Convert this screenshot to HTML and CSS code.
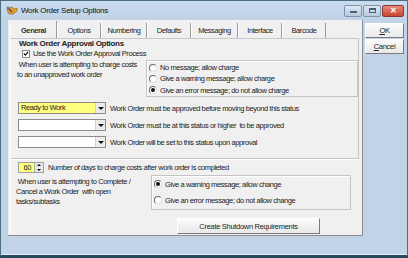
FILE: index.html
```html
<!DOCTYPE html>
<html lang="en">
<head>
    <meta charset="UTF-8">
    <title>Work Order Setup Options</title>
    <link rel="stylesheet" href="styles.css">
</head>
<body>
<div class="window">
    <div class="titlebar">
        <svg class="app-icon" width="12" height="11" viewBox="0 0 12 11">
            <path d="M1 5 L5 2 L9 4 L11 3 L11 6 L7 9 L3 9 Z" fill="#e0a030" stroke="#8a5a10" stroke-width="0.6"/>
            <path d="M2 3 L6 7" stroke="#555" stroke-width="1.6"/>
            <circle cx="2" cy="3" r="1.4" fill="#777"/>
        </svg>
        <span class="title">Work Order Setup Options</span>
        <div class="controls">
            <span class="ctl"><i class="min"></i></span>
            <span class="ctl"><i class="max"></i></span>
            <span class="ctl close">&#x2715;</span>
        </div>
    </div>

    <div class="client">
        <div class="sheet">
            <div class="tabs">
                <span class="tab active">General</span>
                <span class="tab">Options</span>
                <span class="tab">Numbering</span>
                <span class="tab">Defaults</span>
                <span class="tab">Messaging</span>
                <span class="tab">Interface</span>
                <span class="tab">Barcode</span>
            </div>
            <div class="page">
                <div class="group">
                    <div class="group-title">Work Order Approval Options</div>
                    <label class="check-row">
                        <span class="checkbox">
                            <svg width="7" height="7" viewBox="0 0 7 7"><path d="M1 3.5 L2.8 5.3 L6 1.5" fill="none" stroke="#111" stroke-width="1.4"/></svg>
                        </span>
                        Use the Work Order Approval Process
                    </label>
                    <div class="approval-row">
                        <div class="hint">&nbsp;When user is attempting to charge costs<br>to an unapproved work order</div>
                        <div class="radio-box box-a">
                            <div class="radio-row"><span class="radio"></span>No message; allow charge</div>
                            <div class="radio-row"><span class="radio"></span>Give a warning message; allow charge</div>
                            <div class="radio-row"><span class="radio on"></span>Give an error message; do not allow charge</div>
                        </div>
                    </div>
                    <div class="combo-row">
                        <span class="combo yellow"><span class="combo-text">Ready to Work</span><span class="drop"></span></span>
                        Work Order must be approved before moving beyond this status
                    </div>
                    <div class="combo-row">
                        <span class="combo"><span class="combo-text"></span><span class="drop"></span></span>
                        Work Order must be at this status or higher &nbsp;to be approved
                    </div>
                    <div class="combo-row">
                        <span class="combo"><span class="combo-text"></span><span class="drop"></span></span>
                        Work Order will be set to this status upon approval
                    </div>
                </div>

                <div class="spin-row">
                    <span class="spinner"><span class="spin-text">60</span><span class="spin-btns"><i></i><i></i></span></span>
                    Number of days to charge costs after work order is completed
                </div>

                <div class="complete-row">
                    <div class="hint">&nbsp;When user is attempting to Complete /<br>Cancel a Work Order &nbsp;with open<br>tasks/subtasks</div>
                    <div class="radio-box box-b">
                        <div class="radio-row"><span class="radio on"></span>Give a warning message; allow change</div>
                        <div class="radio-row"><span class="radio"></span>Give an error message; do not allow change</div>
                    </div>
                </div>

                <div class="button-row">
                    <button class="btn wide">Create Shutdown Requirements</button>
                </div>
            </div>
        </div>

        <div class="side">
            <button class="btn side-btn"><u>O</u>K</button>
            <button class="btn side-btn"><u>C</u>ancel</button>
        </div>
    </div>
</div>
</body>
</html>
```

FILE: styles.css
```css
* { box-sizing: border-box; }
body { margin: 0; width: 408px; height: 258px; overflow: hidden; background: #1f3b48; font-family: "Liberation Sans", Arial, sans-serif; font-size: 7.5px; letter-spacing: -0.4px; color: #1a1a1a; }
.window { width: 408px; height: 258px; background: #c1d3e6; border: 1px solid #4d6f80; border-bottom: 3px solid #26485a; box-shadow: inset 0 -1px 0 #e6f0f8; display: flex; flex-direction: column; }

.titlebar { height: 19px; display: flex; align-items: center; padding-left: 5px; background: linear-gradient(#c9dbee, #bfd2e6); }
.app-icon { margin-right: 3px; }
.title { font-size: 8px; letter-spacing: -0.3px; color: #111; }
.controls { margin-left: auto; margin-right: 3px; display: flex; gap: 1px; }
.ctl { width: 18px; height: 12px; border: 1px solid #7d94ab; border-radius: 2px; background: linear-gradient(#dde8f3, #b7c9dc); display: flex; align-items: center; justify-content: center; }
.ctl .min { width: 7px; height: 2px; background: #4a5f76; margin-top: 3px; }
.ctl .max { width: 7px; height: 5px; border: 1px solid #4a5f76; border-top-width: 2px; }
.ctl.close { width: 22px; background: linear-gradient(#e58a7a, #c8452f); border-color: #8a3a30; color: #fff; font-size: 8px; font-weight: bold; letter-spacing: 0; }

.client { flex: 1; display: flex; padding-left: 7px; }
.sheet { width: 355px; height: 216px; background: #f0f0f0; border-right: 1px solid #8d8d8d; border-bottom: 1px solid #8d8d8d; display: flex; flex-direction: column; padding: 1px 3px 2px 2px; }

.tabs { height: 18px; display: flex; align-items: flex-end; }
.tab { height: 15px; padding-top: 3px; text-align: center; border-right: 1px solid #9a9a9a; border-left: 1px solid #fff; color: #222; width: 44px; }
.tab:nth-child(1) { width: 47px; height: 17px; padding-top: 5px; font-weight: bold; color: #333; }
.tab:nth-child(3) { width: 46px; }
.tab:nth-child(5) { width: 47px; }

.page { flex: 1; border-top: 1px solid #c9c9c9; border-left: 1px solid #fff; display: flex; flex-direction: column; }

.group { border-bottom: 1px solid #c4c4c4; border-right: 1px solid #c4c4c4; box-shadow: 0 1px 0 #fff; height: 120px; padding-left: 1px; }
.group-title { font-weight: bold; font-size: 8px; letter-spacing: -0.3px; line-height: 10px; padding-left: 7px; color: #222; }
.check-row { display: flex; align-items: center; height: 9px; padding-left: 10px; gap: 3px; margin-top: 0; }
.checkbox { width: 8px; height: 8px; background: #fff; border: 1px solid #8a8a8a; display: flex; align-items: center; justify-content: center; }

.approval-row { display: flex; margin-top: 2px; height: 38px; }
.hint { line-height: 10px; padding-left: 5px; width: 134px; }
.radio-box { border: 1px solid #c4c4c4; box-shadow: inset 1px 1px 0 #fff; display: flex; flex-direction: column; }
.box-a { width: 212px; height: 37px; padding: 1px 0 0 2px; }
.radio-row { display: flex; align-items: center; height: 11.5px; gap: 3px; }
.radio { width: 8px; height: 8px; border-radius: 50%; background: #fff; border: 1px solid; border-color: #6a6a6a #e0e0e0 #e0e0e0 #6a6a6a; position: relative; }
.radio.on::after { content: ""; position: absolute; left: 1px; top: 1px; width: 4px; height: 4px; border-radius: 50%; background: #111; }

.combo-row { display: flex; align-items: center; gap: 4px; height: 12px; margin-top: 4px; padding-left: 6px; }
.combo-row + .combo-row { margin-top: 5px; }
.combo { width: 88px; height: 12px; border: 1px solid #8b8b8b; background: #fff; display: flex; }
.combo.yellow { background: #ffff80; }
.combo-text { flex: 1; padding-left: 2px; line-height: 10px; }
.drop { width: 10px; background: #ececec; border-left: 1px solid #d0d0d0; position: relative; }
.drop::after { content: ""; position: absolute; left: 2px; top: 4px; border: 3px solid transparent; border-top: 3px solid #111; border-bottom: 0; }

.spin-row { display: flex; align-items: center; gap: 4px; height: 11px; margin-top: 3px; padding-left: 7px; }
.spinner { width: 26px; height: 11px; display: flex; border: 1px solid #a0a0a0; }
.spin-text { flex: 1; background: #ffff80; text-align: right; padding-right: 3px; line-height: 9px; }
.spin-btns { width: 9px; display: flex; flex-direction: column; background: #e6e6e6; border-left: 1px solid #b0b0b0; }
.spin-btns i { flex: 1; position: relative; }
.spin-btns i:first-child::after { content: ""; position: absolute; left: 2px; top: 1px; border: 2px solid transparent; border-bottom: 2px solid #111; border-top: 0; }
.spin-btns i:last-child::after { content: ""; position: absolute; left: 2px; top: 1px; border: 2px solid transparent; border-top: 2px solid #111; border-bottom: 0; }

.complete-row { display: flex; margin-top: 2px; height: 35px; }
.complete-row .hint { width: 140px; padding-top: 2px; }
.box-b { width: 200px; height: 35px; padding: 2px 0 0 2px; gap: 4px; }
.box-b .radio-row { height: 12px; }

.button-row { display: flex; padding-left: 166px; margin-top: 8px; }
.btn { font-family: "Liberation Sans", Arial, sans-serif; font-size: 7.5px; letter-spacing: -0.3px; color: #222; background: linear-gradient(#fafafa, #e9e9e9); border: 1px solid; border-color: #fff #7a7a7a #7a7a7a #fff; padding: 0; }
.wide { width: 143px; height: 16px; }

.side { display: flex; flex-direction: column; padding-top: 3px; padding-left: 2px; gap: 1px; }
.side-btn { width: 39px; height: 15px; }
```
